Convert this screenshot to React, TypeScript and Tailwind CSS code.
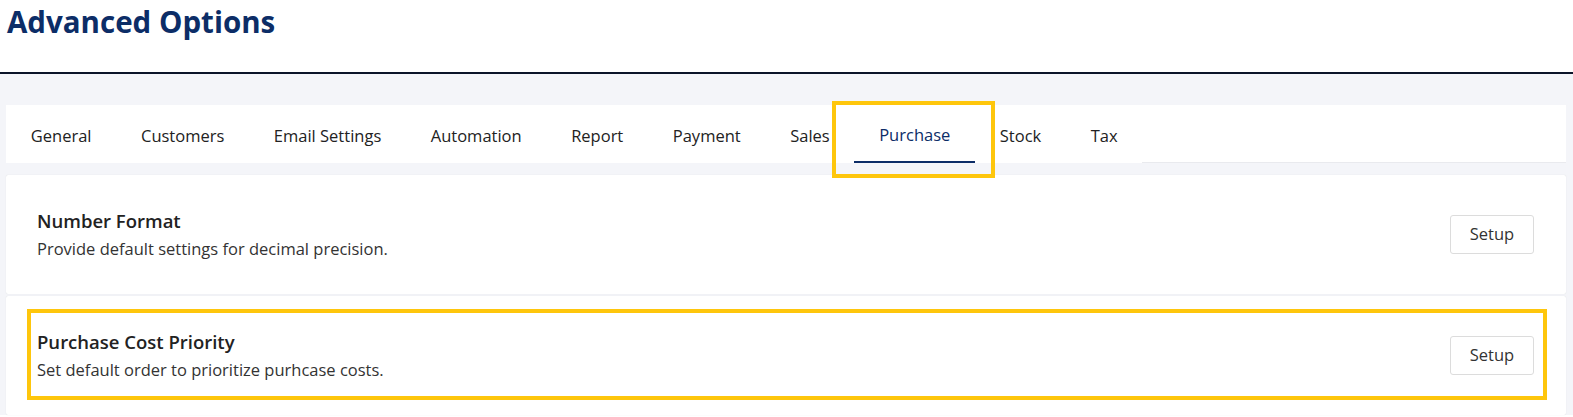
import React from "react";

const tabs = [
  "General",
  "Customers",
  "Email Settings",
  "Automation",
  "Report",
  "Payment",
  "Sales",
  "Purchase",
  "Stock",
  "Tax",
];

interface OptionRowProps {
  title: string;
  description: string;
  highlighted?: boolean;
}

function OptionRow({ title, description, highlighted }: OptionRowProps) {
  return (
    <div className="relative flex h-[119px] items-center justify-between rounded-[2px] bg-white pl-[31px] pr-[32px] shadow-[0_0_1px_rgba(0,0,0,0.15)]">
      <div className="flex flex-col">
        <h3 className="text-[18.5px] font-semibold leading-[28px] text-[#222]">{title}</h3>
        <p className="text-[16.5px] leading-[28px] text-[#333]">{description}</p>
      </div>
      <button className="h-[39px] w-[84px] rounded-[3px] border border-[#dcdcdc] bg-white text-[16.5px] text-[#333]">
        Setup
      </button>
      {/* yellow callout frame */}
      {highlighted && (
        <div className="pointer-events-none absolute left-[21px] right-[19px] top-[13px] bottom-[15px] border-[4px] border-[#fec60c]" />
      )}
    </div>
  );
}

export default function App() {
  return (
    <div className="h-[417px] w-full overflow-hidden bg-white font-['Open_Sans','Noto_Sans',sans-serif]">
      <div className="h-[72px] px-[7px] pt-[3px]">
        <h1 className="text-[29.5px] font-bold leading-[38px] text-[#0c2d67]">Advanced Options</h1>
      </div>
      <div className="h-[2px] bg-[#0b1429]" />
      <div className="bg-[#f4f5f9] pl-[6px] pr-[7px] pt-[31px]">
        <div className="relative z-10 flex h-[58px] bg-white">
          {tabs.map((tab) =>
            tab === "Purchase" ? (
              <div
                key={tab}
                className="relative flex items-center border-b-2 border-[#0c2d67] px-[24.75px] pt-[5px] text-[16.5px] text-[#0c2d67]"
              >
                {tab}
                {/* callout around the active tab */}
                <div className="pointer-events-none absolute left-[-22px] right-[-20px] top-[-4px] bottom-[-17px] border-[4px] border-[#fec60c]" />
              </div>
            ) : (
              <div key={tab} className="flex items-center px-[24.75px] pt-[5px] text-[16.5px] text-[#222]">
                {tab}
              </div>
            )
          )}
          <div className="flex-1 border-b border-[#e9eaee]" />
        </div>
        <div className="mt-[12px] flex flex-col gap-[2px]">
          <OptionRow title="Number Format" description="Provide default settings for decimal precision." />
          <OptionRow
            title="Purchase Cost Priority"
            description="Set default order to prioritize purhcase costs."
            highlighted
          />
        </div>
      </div>
    </div>
  );
}
